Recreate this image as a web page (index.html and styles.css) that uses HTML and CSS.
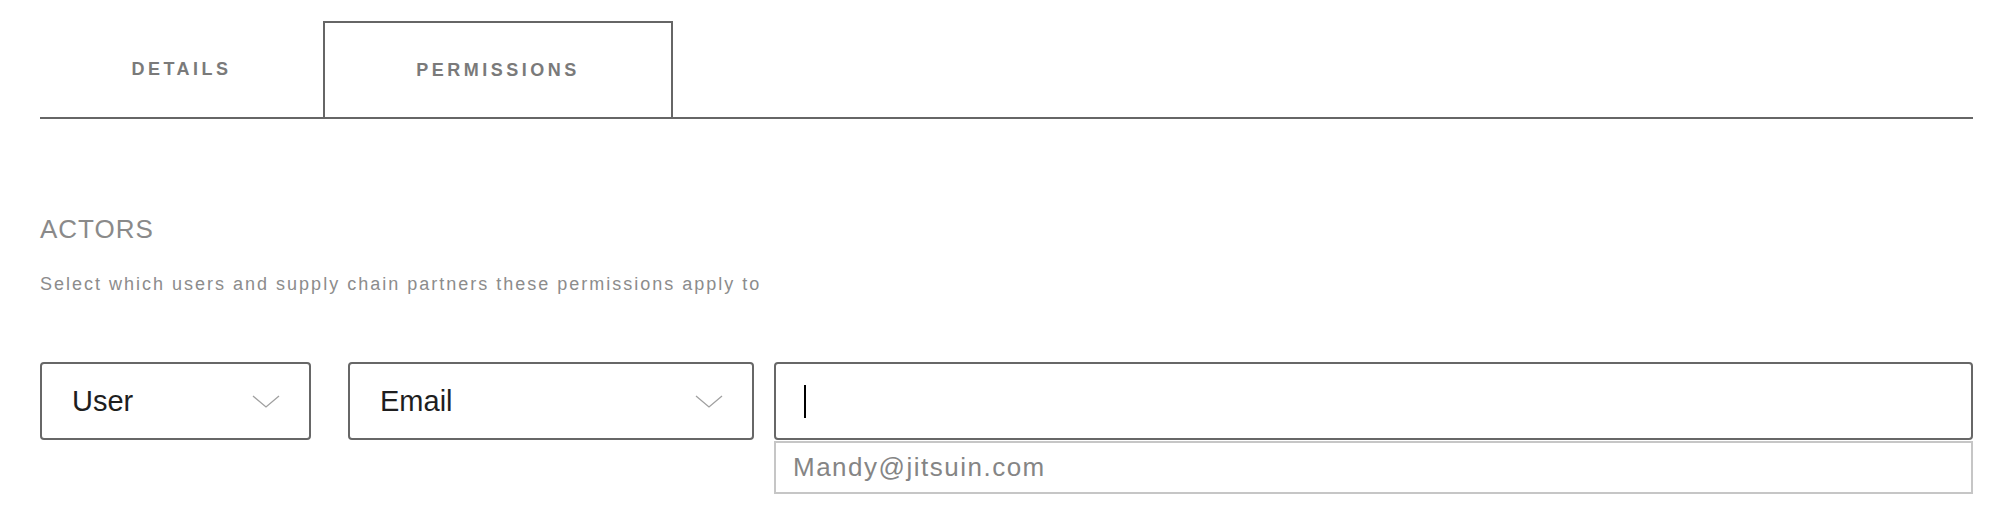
FILE: index.html
```html
<!DOCTYPE html>
<html lang="en">
<head>
<meta charset="utf-8">
<title>Permissions</title>
<link rel="stylesheet" href="styles.css">
</head>
<body>
<div class="page">
  <nav class="tabs">
    <div class="tab">DETAILS</div>
    <div class="tab tab-active">PERMISSIONS</div>
  </nav>
  <section class="actors">
    <h2 class="section-title">ACTORS</h2>
    <p class="section-sub">Select which users and supply chain partners these permissions apply to</p>
    <div class="controls">
      <div class="select select-type">
        <span class="select-value">User</span>
        <svg class="chevron" width="28" height="13" viewBox="0 0 28 13"><polyline points="1,1 14,12 27,1" fill="none" stroke="#a0a0a0" stroke-width="1.3"/></svg>
      </div>
      <div class="select select-field">
        <span class="select-value">Email</span>
        <svg class="chevron" width="28" height="13" viewBox="0 0 28 13"><polyline points="1,1 14,12 27,1" fill="none" stroke="#a0a0a0" stroke-width="1.3"/></svg>
      </div>
      <div class="search">
        <div class="search-box"><span class="caret"></span></div>
        <ul class="suggestions">
          <li class="suggestion">Mandy@jitsuin.com</li>
        </ul>
      </div>
    </div>
  </section>
</div>
</body>
</html>
```
FILE: styles.css
```css
html, body {
  margin: 0;
  padding: 0;
  background: #ffffff;
}

body {
  font-family: "Liberation Sans", Arial, sans-serif;
}

.page {
  box-sizing: border-box;
  min-height: 524px;
  padding: 21px 27px 0 40px;
}

.tabs {
  display: flex;
  border-bottom: 2px solid #666666;
}

.tab {
  box-sizing: border-box;
  height: 96px;
  width: 283px;
  display: flex;
  align-items: center;
  justify-content: center;
  font-size: 18px;
  font-weight: bold;
  letter-spacing: 3.5px;
  color: #7a7a7a;
}

.tab-active {
  width: 350px;
  border: 2px solid #666666;
  border-bottom: none;
}

.actors {
  padding-top: 95px;
}

.section-title {
  margin: 0;
  font-size: 26px;
  line-height: 30px;
  font-weight: normal;
  letter-spacing: 1px;
  color: #8a8a8a;
}

.section-sub {
  margin: 30px 0 0;
  font-size: 18px;
  line-height: 21px;
  letter-spacing: 2px;
  color: #8c8c8c;
}

.controls {
  display: flex;
  align-items: flex-start;
  margin-top: 67px;
}

.select {
  box-sizing: border-box;
  height: 78px;
  border: 2px solid #676767;
  border-radius: 4px;
  display: flex;
  align-items: center;
  justify-content: space-between;
  padding: 0 29px 0 30px;
}

.select-type {
  width: 271px;
}

.select-field {
  width: 406px;
  margin-left: 37px;
}

.select-value {
  font-size: 29px;
  color: #1e1e1e;
}

.chevron {
  display: block;
}

.search {
  position: relative;
  flex: 1;
  margin-left: 20px;
}

.search-box {
  box-sizing: border-box;
  height: 78px;
  border: 2px solid #676767;
  border-radius: 4px;
  display: flex;
  align-items: center;
  padding-left: 28px;
}

.caret {
  display: block;
  width: 2px;
  height: 33px;
  background: #000000;
}

.suggestions {
  box-sizing: border-box;
  position: absolute;
  top: 79px;
  left: 0;
  right: 0;
  height: 53px;
  margin: 0;
  padding: 0;
  list-style: none;
  border: 2px solid #c6c6c6;
  background: #ffffff;
  z-index: 2;
}

.suggestion {
  height: 49px;
  display: flex;
  align-items: center;
  padding-left: 17px;
  font-size: 26px;
  letter-spacing: 1.5px;
  color: #858585;
}
```
